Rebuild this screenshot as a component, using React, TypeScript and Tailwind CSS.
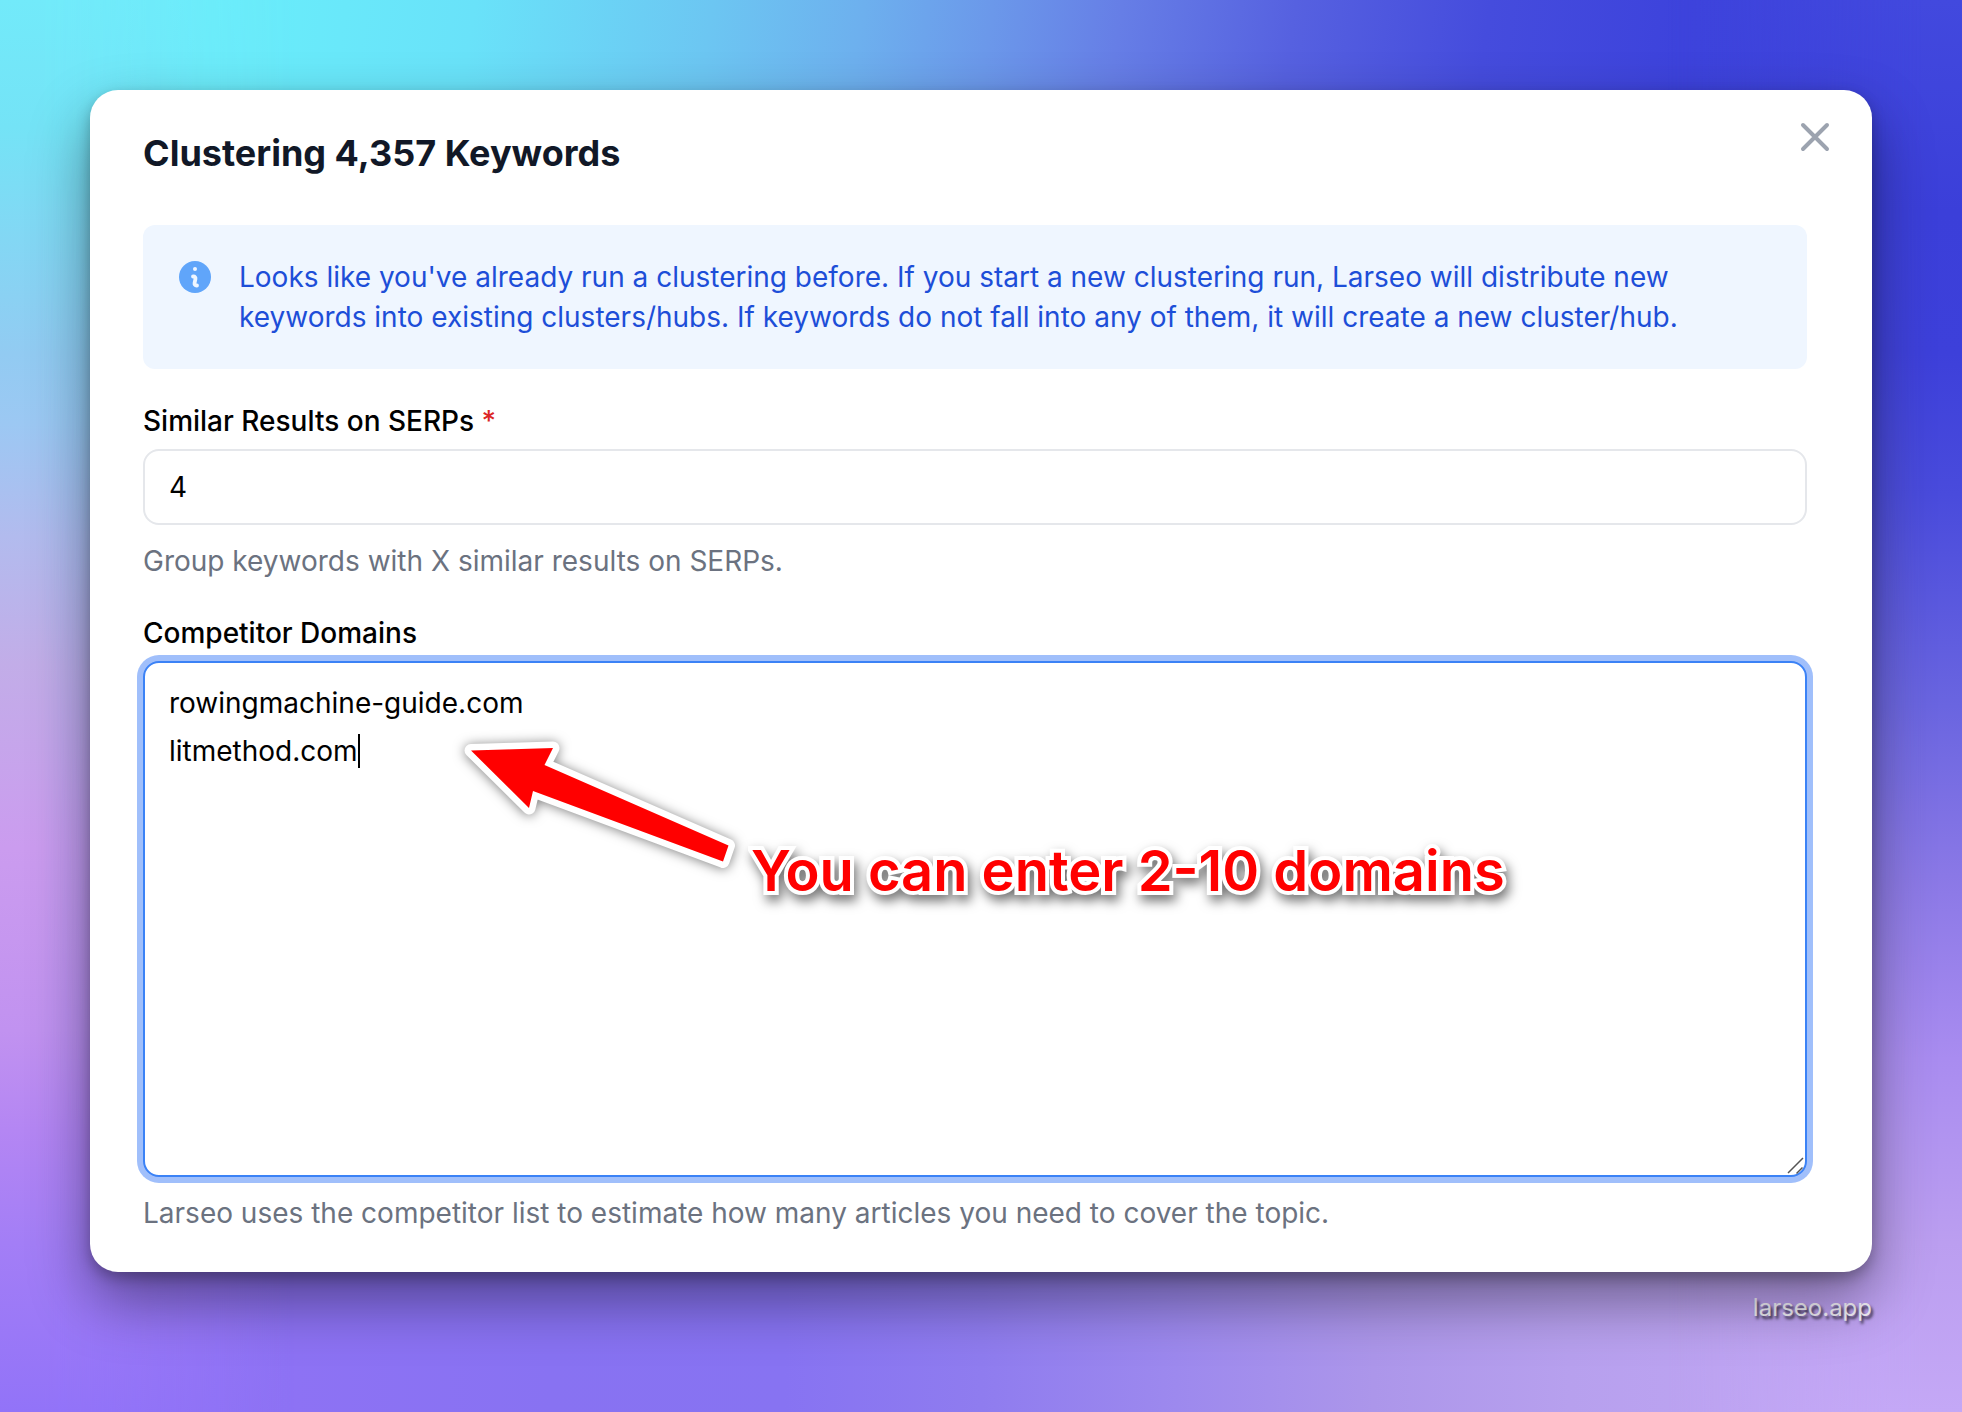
import { useState } from 'react';

function Backdrop() {
  return (
    <div aria-hidden="true" className="col-start-1 row-start-1 grid">
      <div className="col-start-1 row-start-1 bg-[linear-gradient(to_right,#9475f8_0%,#8d72f4_15%,#8872f2_28%,#8773f2_40%,#8f7cef_50%,#9d89ee_60%,#ac96ea_70%,#b7a0ee_80%,#c4a8f6_100%)]" />
      <div className="col-start-1 row-start-1 bg-[linear-gradient(98deg,#72eafa_0%,#69eefb_10%,#69e2f9_22%,#6cc6f2_33%,#6db0ee_40%,#6b98ea_46%,#667ee6_52%,#5661e0_60%,#454cdd_69%,#3d43dc_78%,#3c41db_88%,#4046dd_96%)] [mask-image:linear-gradient(to_bottom,black_10%,transparent_80%)]" />
      <div className="col-start-1 row-start-1 bg-[linear-gradient(to_bottom,#72eafa_0%,#74e3f6_9%,#92cbf2_25%,#9cc8f3_30%,#b2bbee_38%,#c2ade8_47%,#cb9cef_60%,#c192f0_73%,#b486f3_80%,#a37ef6_88%,#9273f8_100%)] [mask-image:linear-gradient(to_right,black_2%,transparent_15%)]" />
      <div className="col-start-1 row-start-1 bg-[linear-gradient(to_bottom,#4249de_0%,#3b3fd9_15%,#3d40da_25%,#494bdc_35%,#6a65e0_50%,#8a78e6_62%,#a98cf0_75%,#bb9ef0_88%,#c4a8f6_100%)] [mask-image:linear-gradient(to_left,black_2%,transparent_15%)]" />
    </div>
  );
}

function InfoIcon() {
  return (
    <svg viewBox="0 0 20 20" fill="none" strokeLinecap="round" aria-hidden="true" className="size-10 shrink-0">
      <circle cx="10" cy="10" r="8" fill="#60a5fa" />
      <circle cx="10" cy="6" r="1" fill="#eff6ff" />
      <path d="M9 9.750h.253a1 1 0 0 1 .976 1.217l-.459 2.066a1 1 0 0 0 .977 1.217H11" stroke="#eff6ff" strokeWidth={1.9} />
    </svg>
  );
}

function CloseIcon() {
  return (
    <svg viewBox="0 0 24 24" fill="none" stroke="currentColor" strokeWidth={2} strokeLinecap="round" strokeLinejoin="round" aria-hidden="true" className="size-12">
      <path d="M6 18 18 6M6 6l12 12" />
    </svg>
  );
}

// Arrow and caption laid over the domains field
function Callout() {
  return (
    <div className="pointer-events-none">
      <svg viewBox="0 0 300 170" aria-hidden="true" className="absolute top-[60px] left-[310px] h-[170px] w-[300px] overflow-visible drop-shadow-[0_1px_6px_rgba(0,0,0,0.5)]">
        <path
          d="M18 29.5 100 27 91.5 44 275.5 124.500 270 140.500 80 70 76 87Z"
          fill="#ff0000"
          stroke="#ffffff"
          strokeWidth={13}
          strokeLinejoin="round"
          paintOrder="stroke"
        />
      </svg>
      <p className="absolute top-[174px] left-[608px] text-[56px] leading-[72px] font-semibold whitespace-nowrap text-[#ff0000] drop-shadow-[3px_6px_6px_rgba(0,0,0,0.55)] [-webkit-text-stroke:8px_white] [paint-order:stroke_fill]">
        You can enter 2-10 domains
      </p>
    </div>
  );
}

export default function App() {
  const [similar, setSimilar] = useState('4');
  const [domains, setDomains] = useState('rowingmachine-guide.com\nlitmethod.com');

  return (
    <div className="grid min-h-screen grid-cols-1 font-[Inter,sans-serif] text-[28px] leading-10 text-black">
      <Backdrop />
      <main className="isolate col-start-1 row-start-1 px-[90px] pt-[90px] pb-16">
        <form className="relative rounded-[28px] bg-white pt-10 pr-[65px] pb-[39px] pl-[53px] shadow-[0_28px_60px_rgba(0,0,0,0.42),0_6px_14px_rgba(0,0,0,0.25)]">
          <button type="button" aria-label="Close" className="absolute top-[23px] right-[33px] text-[#9ca3af]">
            <CloseIcon />
          </button>

          <h1 className="text-[36px] leading-[47px] font-bold text-[#111827]">Clustering 4,357 Keywords</h1>

          <div className="mt-12 flex gap-6 rounded-xl bg-[#eff6ff] p-8 text-[#1d4ed8]">
            <InfoIcon />
            <p className="max-w-[1460px]">
              Looks like you've already run a clustering before. If you start a new clustering run, Larseo will distribute new keywords into existing clusters/hubs. If keywords do not fall into any of them, it will create a new cluster/hub.
            </p>
          </div>

          <label htmlFor="similar" className="mt-8 block font-medium">
            Similar Results on SERPs <span className="text-[#dc2626]">*</span>
          </label>
          <input
            id="similar"
            value={similar}
            onChange={(e) => setSimilar(e.target.value)}
            className="mt-2 block h-[76px] w-full rounded-2xl border-2 border-gray-200 bg-white px-6 outline-none"
          />
          <p className="mt-4 text-[#6b7280]">Group keywords with X similar results on SERPs.</p>

          <label htmlFor="domains" className="mt-8 block font-medium">Competitor Domains</label>
          <div className="relative mt-2">
            <textarea
              id="domains"
              value={domains}
              onChange={(e) => setDomains(e.target.value)}
              className="block h-[516px] w-full resize-none rounded-2xl border-2 border-[#3b82f6] bg-white px-6 py-4 leading-[48px] ring-6 ring-[#a0bffb] outline-none"
            />
            <span className="absolute top-[73px] left-[215px] h-[34px] w-0.5 bg-black" />
            <svg viewBox="0 0 20 20" fill="none" stroke="#555555" strokeWidth={1.5} aria-hidden="true" className="absolute right-[2px] bottom-[2px] size-5">
              <path d="M3 18 18 3M11.500 18.500 17.500 12.500" />
            </svg>
            <Callout />
          </div>
          <p className="mt-4 text-[#6b7280]">Larseo uses the competitor list to estimate how many articles you need to cover the topic.</p>
        </form>

        <p className="mt-4 text-right text-[24px] text-white/90 [text-shadow:2px_3px_3px_rgba(0,0,0,0.75)]">larseo.app</p>
      </main>
    </div>
  );
}
